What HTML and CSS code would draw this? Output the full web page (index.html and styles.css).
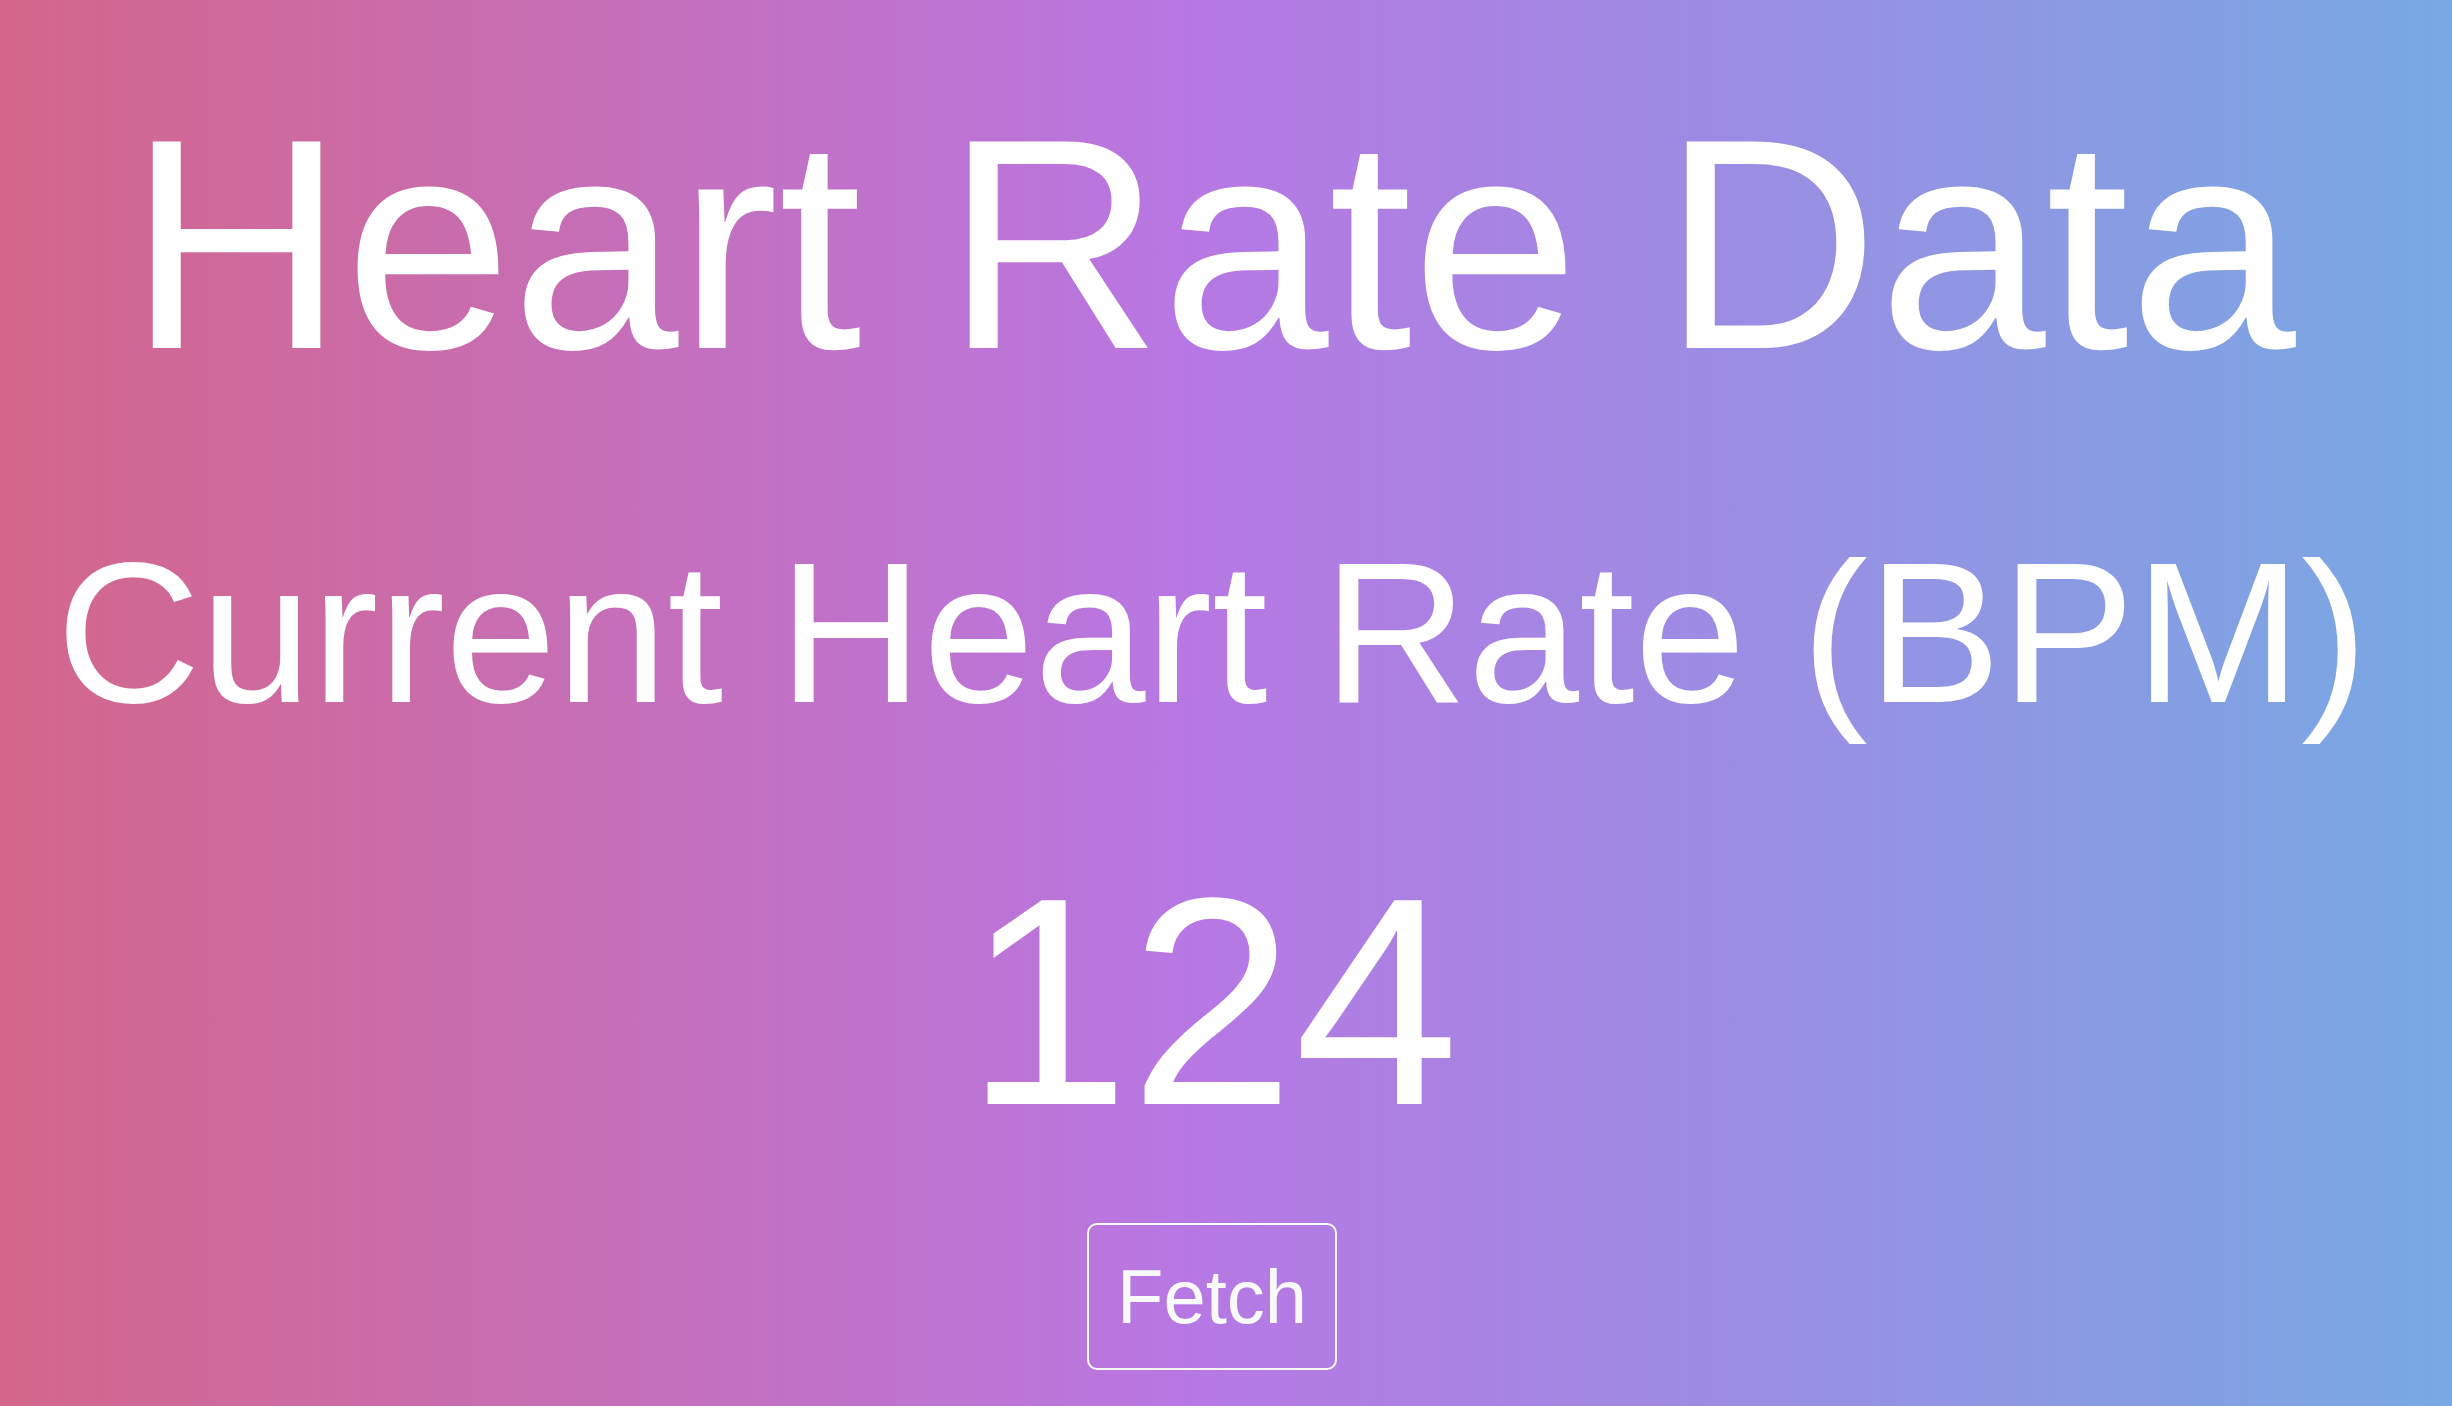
FILE: index.html
```html
<!DOCTYPE html>
<html lang="en">
<head>
<meta charset="utf-8">
<title>Heart Rate Data</title>
<link rel="stylesheet" href="styles.css">
</head>
<body>
<main class="page">
  <h1 class="title">Heart Rate Data</h1>
  <h2 class="subtitle">Current Heart Rate (BPM)</h2>
  <div class="bpm">124</div>
  <button class="fetch" type="button">Fetch</button>
</main>
</body>
</html>
```

FILE: styles.css
```css
html, body {
  margin: 0;
  padding: 0;
  height: 100%;
}

body {
  background: linear-gradient(90deg, #d4668a 0%, #b877e3 48%, #77a9e3 100%);
  font-family: "Liberation Sans", Arial, Helvetica, sans-serif;
  color: #ffffff;
}

.page {
  display: flex;
  flex-direction: column;
  align-items: center;
  text-align: center;
  padding-right: 28px;
  min-height: 100%;
  box-sizing: border-box;
}

.title {
  margin: 94px 0 0;
  font-size: 300px;
  font-weight: 400;
  line-height: 1;
  white-space: nowrap;
}

.subtitle {
  margin: 139px 0 0;
  font-size: 200px;
  font-weight: 400;
  line-height: 1;
  white-space: nowrap;
}

.bpm {
  margin: 121px 0 0;
  font-size: 296px;
  line-height: 1;
}

.fetch {
  margin-top: 73px;
  font-family: "Liberation Sans", Arial, Helvetica, sans-serif;
  font-size: 76px;
  line-height: 87px;
  padding: 28px 28px;
  color: #f8f9fa;
  background: transparent;
  border: 2px solid #f8f9fa;
  border-radius: 10px;
  cursor: pointer;
}
```
